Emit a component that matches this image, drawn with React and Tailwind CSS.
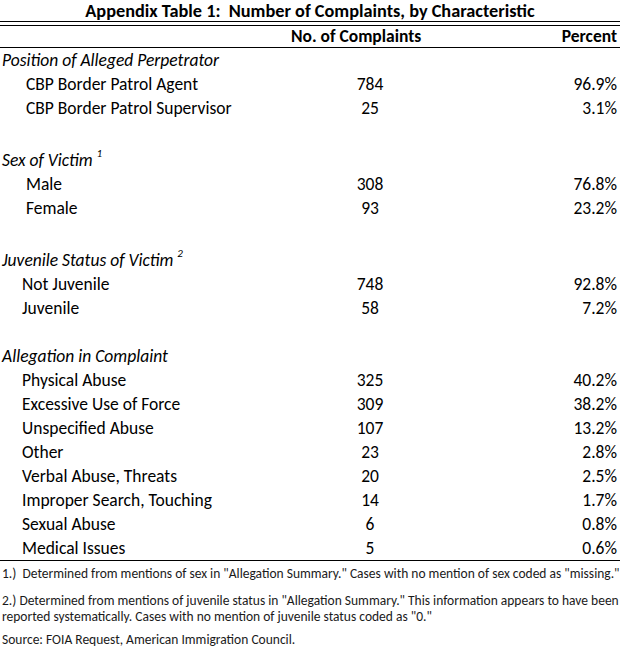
import React from 'react';

const sections = [
  {
    title: 'Position of Alleged Perpetrator',
    indent: 'pl-[26px]',
    rows: [
      ['CBP Border Patrol Agent', '784', '96.9%'],
      ['CBP Border Patrol Supervisor', '25', '3.1%'],
    ],
  },
  {
    title: 'Sex of Victim',
    note: '1',
    indent: 'pl-[26px]',
    rows: [
      ['Male', '308', '76.8%'],
      ['Female', '93', '23.2%'],
    ],
  },
  {
    title: 'Juvenile Status of Victim',
    note: '2',
    indent: 'pl-[22px]',
    rows: [
      ['Not Juvenile', '748', '92.8%'],
      ['Juvenile', '58', '7.2%'],
    ],
  },
  {
    title: 'Allegation in Complaint',
    indent: 'pl-[22px]',
    rows: [
      ['Physical Abuse', '325', '40.2%'],
      ['Excessive Use of Force', '309', '38.2%'],
      ['Unspecified Abuse', '107', '13.2%'],
      ['Other', '23', '2.8%'],
      ['Verbal Abuse, Threats', '20', '2.5%'],
      ['Improper Search, Touching', '14', '1.7%'],
      ['Sexual Abuse', '6', '0.8%'],
      ['Medical Issues', '5', '0.6%'],
    ],
  },
];

function Row({ label, count, pct, indent }) {
  return (
    <div className="flex h-[24px] items-end pb-[2px]">
      <div className={`w-[300px] ${indent}`}>{label}</div>
      <div className="w-[140px] text-center">{count}</div>
      <div className="flex-1 pr-[3px] text-right">{pct}</div>
    </div>
  );
}

export default function App() {
  return (
    <div className="w-[620px] h-[659px] bg-white text-black font-['Carlito','Liberation_Sans',sans-serif] text-[17.5px] leading-[20px]">
      <div className="h-[21px] pt-[1px] text-center font-bold text-[18.3px] whitespace-nowrap">
        Appendix Table 1:&nbsp; Number of Complaints, by Characteristic
      </div>
      <div className="h-[5px] border-y border-black" />
      <div className="flex h-[22px] items-end pb-[1px] border-b border-black font-bold whitespace-nowrap">
        <div className="w-[291px]" />
        <div className="w-[135px]">No. of Complaints</div>
        <div className="flex-1 pr-[3px] text-right">Percent</div>
      </div>

      {sections.map((s, i) => (
        <div key={s.title}>
          {i > 0 && <div className="h-[24px]" />}
          <div className={`flex items-end pb-[2px] pl-[2px] italic ${s.note ? 'h-[28px]' : 'h-[24px]'}`}>
            <span>
              {s.title}
              {s.note && <sup className="ml-[4px] text-[11px] top-[-9px]">{s.note}</sup>}
            </span>
          </div>
          {s.rows.map((r) => (
            <Row key={r[0]} label={r[0]} count={r[1]} pct={r[2]} indent={s.indent} />
          ))}
        </div>
      ))}

      <div className="border-b border-black" />

      <div className="pl-[2px] text-[13.5px] leading-[16px] text-[#1a1a1a] whitespace-nowrap">
        <p className="mt-[5px]">1.)&nbsp; Determined from mentions of sex in "Allegation Summary." Cases with no mention of sex coded as "missing."</p>
        <p className="mt-[11px]">2.) Determined from mentions of juvenile status in "Allegation Summary." This information appears to have been</p>
        <p>reported systematically. Cases with no mention of juvenile status coded as "0."</p>
        <p className="mt-[7px]">Source: FOIA Request, American Immigration Council.</p>
      </div>
    </div>
  );
}
